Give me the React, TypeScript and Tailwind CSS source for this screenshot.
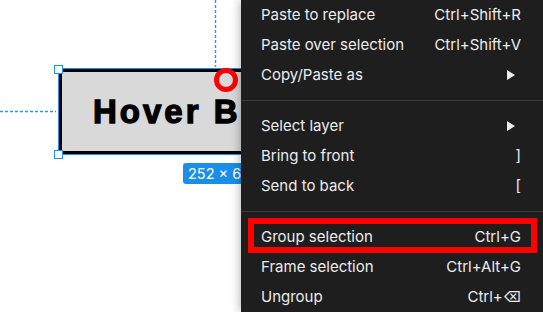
import { ReactNode } from "react";

type Item = { label: string; shortcut?: ReactNode; submenu?: boolean };

const groups: Item[][] = [
  [
    { label: "Paste to replace", shortcut: "Ctrl+Shift+R" },
    { label: "Paste over selection", shortcut: "Ctrl+Shift+V" },
    { label: "Copy/Paste as", submenu: true },
  ],
  [
    { label: "Select layer", submenu: true },
    { label: "Bring to front", shortcut: "]" },
    { label: "Send to back", shortcut: "[" },
  ],
  [
    { label: "Group selection", shortcut: "Ctrl+G" },
    { label: "Frame selection", shortcut: "Ctrl+Alt+G" },
    { label: "Ungroup", shortcut: "Ctrl+⌫" },
  ],
];

const Arrow = () => (
  <svg width="8" height="10" viewBox="0 0 8 10" className="mr-[6px]">
    <polygon points="0,0 8,5 0,10" fill="#ececec" />
  </svg>
);

const MenuRow = ({ item }: { item: Item }) => (
  <div className="flex h-[30px] items-center justify-between pl-5 pr-[22px]">
    <span>{item.label}</span>
    {item.submenu ? <Arrow /> : <span>{item.shortcut}</span>}
  </div>
);

const App = () => {
  return (
    <div className="relative h-[312px] w-[543px] overflow-hidden bg-white font-['Inter','DejaVu_Sans',sans-serif]">
      {/* guides */}
      <svg className="absolute left-0 top-0" width="240" height="120">
        <line x1="215.5" y1="0" x2="215.5" y2="67" stroke="#2a98f2" strokeWidth="1.4" strokeDasharray="3 2" />
        <line x1="0" y1="111.5" x2="56" y2="111.5" stroke="#2a98f2" strokeWidth="1.4" strokeDasharray="3 2" />
      </svg>

      {/* selected button on canvas */}
      <div className="absolute left-[59px] top-[69px] flex h-[85px] w-[315px] items-center overflow-hidden border-[3px] border-black bg-[#d9d9d9] pl-[31px] outline outline-1 outline-[#1a94f0]">
        <span className="whitespace-nowrap font-['Liberation_Sans',Arial,sans-serif] text-[33px] font-bold leading-none tracking-[3px] text-black [-webkit-text-stroke:1.3px_black]">
          Hover Button
        </span>
      </div>
      <div className="absolute left-[54px] top-[65px] h-[9px] w-[9px] border border-[#1a94f0] bg-white" />
      <div className="absolute left-[54px] top-[150px] h-[9px] w-[9px] border border-[#1a94f0] bg-white" />

      {/* red marker */}
      <div className="absolute left-[214px] top-[68px] h-[24px] w-[24px] rounded-full border-[5px] border-[#ff0000]" />

      {/* size label */}
      <div className="absolute left-[183px] top-[163px] flex h-[21px] items-center rounded-[3px] bg-[#1a8fe8] px-[5px] text-[14.5px] text-white">
        252 × 68
      </div>

      {/* context menu */}
      <div className="absolute left-[241px] top-0 w-[302px] bg-[#1e1e1e] text-[15px] text-[#ececec] shadow-[0_0_10px_rgba(0,0,0,0.35)]">
        {groups.map((group, gi) => (
          <div key={gi}>
            {gi > 0 && <div className="my-[10px] h-px bg-[#3a3a3a]" />}
            {group.map((item) => (
              <MenuRow key={item.label} item={item} />
            ))}
          </div>
        ))}
        <div className="pointer-events-none absolute left-[7px] top-[218px] h-[35px] w-[289px] border-[6px] border-[#ff0000]" />
      </div>
    </div>
  );
};

export default App;
